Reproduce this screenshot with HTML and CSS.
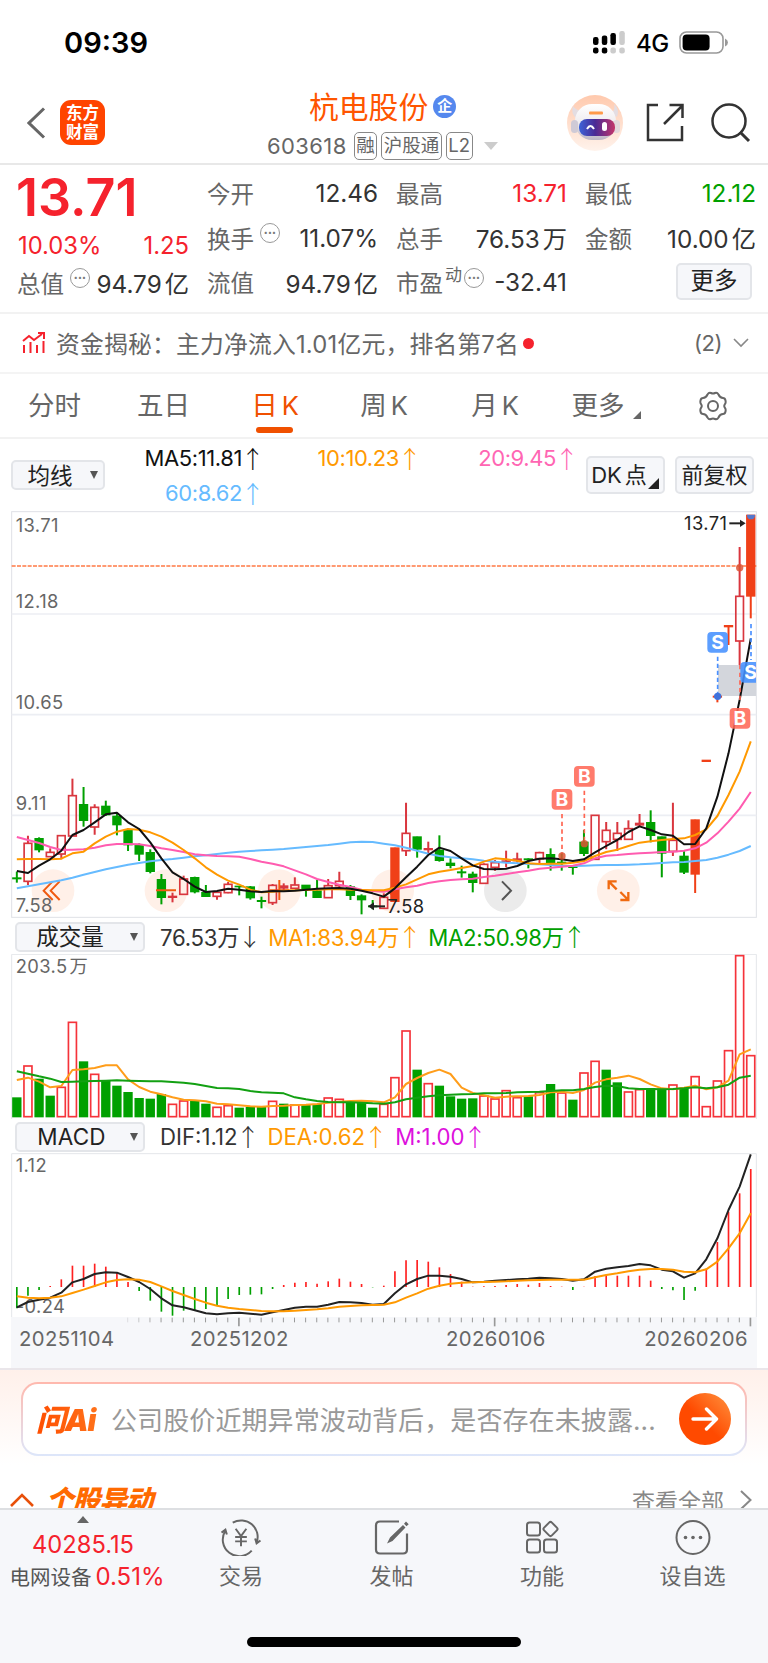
FILE: index.html
```html
<!DOCTYPE html>
<html lang="zh-CN">
<head>
  <meta charset="UTF-8">
  <meta name="viewport" content="width=device-width, initial-scale=1.0">
  <title>杭电股份 603618</title>
  <link rel="stylesheet" href="styles.css">
</head>
<body>
  <div class="phone">
    <div class="status">
      <span class="time">09:39</span>
      <div class="status-right">
        <svg class="signal" width="32" height="23" viewBox="0 0 32 23">
          <g fill="#000">
            <rect x="0" y="6" width="5.5" height="8" rx="2.2"/><rect x="8.8" y="4.5" width="5.5" height="9.5" rx="2.2"/><rect x="17.4" y="2" width="5.5" height="12" rx="2.2"/>
            <rect x="0" y="16.5" width="5.5" height="6" rx="2.2"/><rect x="8.8" y="16.5" width="5.5" height="6" rx="2.2"/>
          </g>
          <g fill="#ccc">
            <rect x="26.3" y="0" width="5.5" height="14" rx="2.2"/><rect x="17.4" y="16.5" width="5.5" height="6" rx="2.2"/><rect x="26.3" y="16.5" width="5.5" height="6" rx="2.2"/>
          </g>
        </svg>
        <span class="net">4G</span>
        <svg width="49" height="23" viewBox="0 0 49 23">
          <rect x="1" y="1" width="43" height="21" rx="6.5" fill="none" stroke="#999" stroke-width="1.6"/>
          <rect x="3.6" y="3.5" width="27" height="16" rx="4" fill="#000"/>
          <path d="M46 7.5q3 1.5 3 4t-3 4z" fill="#999"/>
        </svg>
      </div>
    </div>

    <header class="nav">
      <div class="nav-left">
        <svg width="19" height="32" viewBox="0 0 19 32"><path d="M17 1.5L2 16l15 14.5" fill="none" stroke="#666" stroke-width="3"/></svg>
        <div class="logo"><span>东方</span><span>财富</span></div>
      </div>
      <div class="nav-title">
        <h1>杭电股份<i class="verified">企</i></h1>
        <div class="code">603618<em class="first">融</em><em>沪股通</em><em>L2</em><i class="caret"></i></div>
      </div>
      <div class="nav-right">
        <svg width="56" height="56" viewBox="0 0 56 56">
          <defs>
            <linearGradient id="halo" x1="0" y1="0" x2="0" y2="1"><stop offset="0" stop-color="#ffc9ad"/><stop offset="1" stop-color="#fff3ec"/></linearGradient>
            <linearGradient id="visor" x1="0" y1="0" x2="1" y2="0"><stop offset="0" stop-color="#3d63d8"/><stop offset=".45" stop-color="#4a2a94"/><stop offset="1" stop-color="#c4356a"/></linearGradient>
            <linearGradient id="shell" x1="0" y1="0" x2="0" y2="1"><stop offset="0" stop-color="#fff"/><stop offset=".5" stop-color="#f0edf0"/><stop offset="1" stop-color="#bdb6c4"/></linearGradient>
          </defs>
          <circle cx="28" cy="28" r="28" fill="url(#halo)"/>
          <path d="M10 24Q3 18 6 11q3 5 11 5zM43 18q6-2 4-9 6 5 3 13z" fill="#e4dde2"/>
          <rect x="8" y="9" width="41" height="36" rx="17" fill="url(#shell)"/>
          <rect x="4" y="25" width="7" height="13" rx="3.5" fill="#cfcad6"/><rect x="46" y="25" width="7" height="13" rx="3.5" fill="#e3d8dc"/>
          <rect x="12" y="24" width="36" height="17" rx="8" fill="url(#visor)"/>
          <rect x="22" y="16.5" width="14" height="3" rx="1" fill="#ff9a4a"/>
          <path d="M20 34q3.500-6 7 0" fill="none" stroke="#fff" stroke-width="2"/><rect x="35" y="27" width="5" height="9" rx="2.500" fill="#fff"/>
        </svg>
        <svg class="share" width="39" height="39" viewBox="0 0 39 39"><path d="M12 2H2v35h34V23M18 21L36 3M23.500 2H36.500V15" fill="none" stroke="#333" stroke-width="2.500"/></svg>
        <svg width="40" height="40" viewBox="0 0 40 40"><circle cx="18" cy="18" r="16.5" fill="none" stroke="#333" stroke-width="2.5"/><path d="M29 29l9 9" stroke="#333" stroke-width="3"/></svg>
      </div>
    </header>

    <section class="quote">
      <div class="quote-main">
        <div class="price">13.71</div>
        <div class="change"><span>10.03%</span><span>1.25</span></div>
        <div class="cap"><label>总值</label><i class="tip">•••</i><b>94.79<u>亿</u></b></div>
      </div>
      <div class="quote-grid">
        <div><label>今开</label><b>12.46</b></div>
        <div><label>最高</label><b class="red">13.71</b></div>
        <div><label>最低</label><b class="green">12.12</b></div>
        <div><label>换手</label><i class="tip">•••</i><b>11.07%</b></div>
        <div><label>总手</label><b>76.53<u>万</u></b></div>
        <div><label>金额</label><b>10.00<u>亿</u></b></div>
        <div><label>流值</label><b>94.79<u>亿</u></b></div>
        <div><label>市盈</label><sup>动</sup><i class="tip tip-pe">•••</i><b>-32.41</b></div>
        <div><button class="more">更多</button></div>
      </div>
    </section>

    <section class="news">
      <svg width="24" height="22" viewBox="0 0 24 22"><g fill="none" stroke="#f5222d" stroke-width="2"><path d="M1 9l6-5 5 4 8-6M16 1h6v6M2 13v8M8.500 10v11M15 13v8M21.500 9v12"/></g></svg>
      <span class="news-text">资金揭秘：主力净流入1.01亿元，排名第7名</span>
      <i class="dot"></i>
      <span class="news-count">(2)</span>
      <svg width="16" height="10" viewBox="0 0 16 10"><path d="M1 1l7 7 7-7" fill="none" stroke="#888" stroke-width="1.6"/></svg>
    </section>

    <nav class="periods">
      <span>分时</span>
      <span>五日</span>
      <span class="active">日<u>K</u></span>
      <span>周<u>K</u></span>
      <span>月<u>K</u></span>
      <span class="drop">更多</span>
      <svg width="30" height="30" viewBox="0 0 30 30"><g fill="none" stroke="#666" stroke-width="2"><path d="M9.500 3.500Q11 1 13 2q2 1 4 0 2-1 3.500 1.500Q22 7 25 7q2 0 2.500 2.500Q28 12 27 13q-1.500 2 0 4 1 1 .5 3.500Q27 23 25 23q-3 0-4.500 3.500Q19 29 17 28q-2-1-4 0-2 1-3.500-1.500Q8 23 5 23q-2 0-2.500-2.500Q2 18 3 17q1.500-2 0-4-1-1-.5-3.500Q3 7 5 7q3 0 4.500-3.500z"/><circle cx="15" cy="15" r="5"/></g></svg>
    </nav>

    <section class="averages">
      <button class="pick pick-ma">均线</button>
      <div class="ma-grid">
        <span class="ma5">MA5:11.81<s>↑</s></span>
        <span class="ma10">10:10.23<s>↑</s></span>
        <span class="ma20">20:9.45<s>↑</s></span>
        <span class="ma60">60:8.62<s>↑</s></span>
      </div>
      <button class="tool tool-dk">DK<u>点</u></button>
      <button class="tool">前复权</button>
    </section>

    <svg id="kline" class="chart" width="768" height="407" viewBox="0 33 2304 1221"></svg>

    <div class="legend">
      <button class="pick">成交量</button>
      <span>76.53万<s>↓</s></span>
      <span class="ma10">MA1:83.94万<s>↑</s></span>
      <span class="green">MA2:50.98万<s>↑</s></span>
    </div>
    <svg id="volume" class="chart" width="768" height="165" viewBox="0 132 2304 495"></svg>

    <div class="legend legend-macd">
      <button class="pick">MACD</button>
      <span>DIF:1.12<s>↑</s></span>
      <span class="ma10">DEA:0.62<s>↑</s></span>
      <span class="purple">M:1.00<s>↑</s></span>
    </div>
    <svg id="macd" class="chart" width="768" height="164" viewBox="0 99 2304 492"></svg>
    <div class="dates">
      <svg id="ticks" width="745" height="10" viewBox="34 0 2235 30"></svg>
      <div class="date-row"><span>20251104</span><span>20251202</span><span>20260106</span><span>20260206</span></div>
    </div>

    <section class="ask">
      <div class="ask-card">
        <span class="ask-logo">问Ai</span>
        <span class="ask-text">公司股价近期异常波动背后，是否存在未披露...</span>
        <div class="ask-go"><svg width="28" height="24" viewBox="0 0 28 24"><path d="M2 12h23M15.500 2l10 10-10 10" fill="none" stroke="#fff" stroke-width="3.400" stroke-linecap="round" stroke-linejoin="round"/></svg></div>
      </div>
      <div class="moves">
        <svg width="24" height="14" viewBox="0 0 24 14"><path d="M1 13L12 2l11 11" fill="none" stroke="#e8500a" stroke-width="2.6"/></svg>
        <h2>个股异动</h2>
        <span>查看全部</span>
        <svg width="12" height="20" viewBox="0 0 12 20"><path d="M1 1l9.500 9L1 19" fill="none" stroke="#888" stroke-width="2"/></svg>
      </div>
    </section>

    <footer class="tabbar">
      <div class="tab-index">
        <i class="up"></i>
        <span class="index">40285.15</span>
        <span class="sector">电网设备<b>0.51%</b></span>
      </div>
      <div class="tab">
        <svg width="42" height="38" viewBox="0 0 42 38"><g fill="none" stroke="#666" stroke-width="2"><path d="M12.500 3.800A17 17 0 0 1 37 24.500M41 22l-4 3-1.500-5M32 32.500A17 17 0 0 1 5 12M1 14l4-3 1.500 5"/><path d="M15.500 10l5.500 7.500 5.500-7.500M21 17.500V28M15 18.500h12M15 23h12"/></g></svg>
        <span>交易</span>
      </div>
      <div class="tab">
        <svg width="36" height="36" viewBox="0 0 36 36"><path d="M25 2H6Q2 2 2 6v24q0 4 4 4h23q4 0 4-4V14" fill="none" stroke="#666" stroke-width="2.2"/><path d="M13 24l3-6L29 5.500l2.500 2.500L18.500 21.500zM30 4.300l2-2.300 2.700 2.700-2.200 2z" fill="#666"/></svg>
        <span>发帖</span>
      </div>
      <div class="tab">
        <svg width="36" height="36" viewBox="0 0 36 36"><g fill="none" stroke="#666" stroke-width="2"><rect x="3" y="3" width="13" height="13" rx="2.5"/><rect x="3" y="20" width="13" height="13" rx="2.5"/><rect x="20" y="20" width="13" height="13" rx="2.5"/><rect x="21" y="4" width="11" height="11" rx="2" transform="rotate(45 26.5 9.5)"/></g></svg>
        <span>功能</span>
      </div>
      <div class="tab">
        <svg width="36" height="36" viewBox="0 0 36 36"><circle cx="18" cy="18" r="16.5" fill="none" stroke="#666" stroke-width="2"/><g fill="#666"><circle cx="10.5" cy="18" r="1.8"/><circle cx="18" cy="18" r="1.8"/><circle cx="25.5" cy="18" r="1.8"/></g></svg>
        <span>设自选</span>
      </div>
      <div class="home"></div>
    </footer>
  </div>
  <script src="chart.js"></script>
</body>
</html>
```

FILE: styles.css
```css
:root {
  --red: #f5222d;
  --green: #00a000;
  --orange: #ff9900;
  --brand: #f05000;
  --text: #333333;
  --muted: #666666;
  --panel: #f6f7fa;
}

* {
  margin: 0;
  padding: 0;
  box-sizing: border-box;
}

body {
  font-family: Inter, "Noto Sans CJK SC", sans-serif;
  background: #fff;
  color: var(--text);
}

i, em { font-style: normal; }
b { font-weight: 400; }
s, u { text-decoration: none; }
svg { display: block; flex: none; }
button { font-family: inherit; color: #222; background: var(--panel); border: 2px solid #e3e5e9; border-radius: 5px; }

.phone {
  width: 768px;
  height: 1663px;
  overflow: hidden;
  display: flex;
  flex-direction: column;
}
.phone > * { flex: none; }

.red { color: var(--red) !important; }
.green { color: var(--green) !important; }
.purple { color: #dd11dd; }

/* status bar */
.status {
  height: 84px;
  padding: 0 40px 0 64px;
  display: flex;
  justify-content: space-between;
  align-items: center;
  color: #000;
}
.time { font-size: 29px; font-weight: 600; }
.status-right { display: flex; align-items: center; }
.net { font-size: 24px; font-weight: 500; margin: 2px 10px 0 11px; letter-spacing: -0.3px; }

/* header */
.nav {
  height: 81px;
  display: grid;
  grid-template-columns: 230px 1fr 230px;
  border-bottom: 2px solid #e8e8e8;
}
.nav-left { display: flex; align-items: center; gap: 14px; padding: 0 0 2px 27px; }
.logo {
  width: 45px;
  height: 45px;
  border-radius: 11px;
  background: #ff4400;
  color: #fff;
  font-size: 16.5px;
  font-weight: 700;
  line-height: 18.5px;
  display: flex;
  flex-direction: column;
  justify-content: center;
  align-items: center;
}
.nav-title h1 {
  height: 42px;
  margin-bottom: 4px;
  padding-left: 79px;
  display: flex;
  align-items: center;
  font-size: 29.8px;
  font-weight: 400;
  color: #ff5500;
}
.verified {
  width: 23px;
  height: 23px;
  margin: 2px 0 0 5px;
  border-radius: 50%;
  background: #5588ee;
  color: #fff;
  font-size: 15px;
  font-weight: 700;
  line-height: 22px;
  text-align: center;
}
.code { display: flex; align-items: center; padding-left: 37px; height: 32px; font-size: 22px; letter-spacing: 0.4px; color: var(--muted); }
.code em { height: 28px; line-height: 24px; padding: 0 1.5px; border: 1.5px solid #888; border-radius: 5px; font-size: 18.5px; letter-spacing: 0; margin-right: 4px; }
.code .first { margin-left: 7px; }
.caret { border: 7px solid transparent; border-top: 8px solid #ccc; border-bottom: 0; margin-left: 7px; }
.nav-right { display: flex; align-items: center; padding: 0 0 2px 29px; gap: 23px; }
.nav-right svg + svg + svg { margin-left: 3px; }

/* quote */
.quote {
  height: 149px;
  display: flex;
  gap: 18px;
  padding: 6px 12px 0 18px;
  border-bottom: 2px solid #f2f2f2;
  font-size: 24px;
}
.quote label { font-size: 23.5px; color: var(--muted); }
.quote-main { width: 171px; color: var(--red); }
.price { height: 53px; line-height: 54px; font-size: 52px; font-weight: 600; margin-left: -2px; }
.change { height: 43px; display: flex; justify-content: space-between; align-items: center; font-size: 23.8px; }
.cap { height: 31px; display: flex; align-items: center; color: var(--text); }
.cap label { margin-left: -1px; }
.quote b { margin-left: auto; color: #333; font-size: 24.3px; white-space: nowrap; }
.quote u { margin-left: 3px; }
.quote-grid {
  flex: 1;
  display: grid;
  grid-template-columns: repeat(3, 171px);
  grid-auto-rows: 44.5px;
  gap: 0 18px;
}
.quote-grid div { display: flex; align-items: center; }
.tip {
  width: 20px;
  height: 20px;
  margin: -9px 0 0 6px;
  border: 1.5px solid #999;
  border-radius: 50%;
  font-size: 7px;
  line-height: 17px;
  letter-spacing: 0.3px;
  text-align: center;
  color: #777;
}
.tip-pe { margin-left: 2px; }
.quote sup { font-size: 17px; line-height: 20px; color: var(--muted); margin: -14px 0 0 2px; }
.more { width: 76px; height: 37px; margin: -2px 4px 0 auto; font-size: 23.5px; line-height: 30px; }

/* news */
.news { height: 60px; display: flex; align-items: center; padding: 0 19px 0 22px; border-bottom: 2px solid #f4f4f4; font-size: 23.8px; color: var(--muted); }
.news-text { margin: -1px 0 0 10px; letter-spacing: 0.2px; }
.dot { width: 11px; height: 11px; margin-left: 4px; border-radius: 50%; background: var(--red); }
.news-count { margin: 0 11px 0 auto; font-size: 22px; letter-spacing: -0.5px; }

/* periods */
.periods {
  height: 65px;
  display: grid;
  grid-template-columns: 109px 109px 109px 109px 109px 135px 1fr;
  align-items: center;
  border-bottom: 2px solid #f2f2f2;
  font-size: 26.5px;
  color: var(--muted);
  text-align: center;
}
.periods span { height: 63px; line-height: 63px; position: relative; }
.periods u { margin-left: 4px; font-size: 25.5px; }
.periods span:nth-child(4) { padding-left: 5px; }
.periods span:nth-child(5) { padding-left: 9px; }
.periods .active { color: var(--brand); padding-left: 5px; }
.active::after {
  content: "";
  position: absolute;
  left: 38px;
  bottom: 4px;
  width: 37px;
  height: 6px;
  border-radius: 3px;
  background: var(--brand);
}
.drop { padding-right: 29px; }
.drop::after {
  content: "";
  position: absolute;
  right: 39px;
  bottom: 18px;
  border-left: 8px solid transparent;
  border-bottom: 8px solid #666;
}
.periods svg { margin-left: 18px; }

/* averages */
.averages { height: 72px; display: flex; padding-left: 11px; }
.pick {
  position: relative;
  width: 130px;
  height: 30px;
  padding-right: 20px;
  font-size: 22.5px;
  line-height: 25px;
}
.pick::after {
  content: "";
  position: absolute;
  right: 5px;
  top: 9px;
  border: 4px solid transparent;
  border-top: 8px solid #555;
  border-bottom: 0;
}
.pick-ma { width: 94px; margin-top: 21px; padding-right: 16px; }
.ma-grid {
  width: 470px;
  display: grid;
  grid-template-columns: 154px 157px 157px;
  grid-auto-rows: 34.5px;
  font-size: 22px;
  text-align: right;
  letter-spacing: -0.4px;
  margin-top: 2px;
}
.ma-grid span, .legend span { display: flex; align-items: center; justify-content: flex-end; }
s { font-family: "Noto Sans CJK SC"; font-weight: 300; width: 13px; margin-left: 4px; font-size: 24px; line-height: 30px; display: flex; justify-content: center; }
.ma5 { color: #111; }
.ma10 { color: var(--orange); }
.ma20 { color: #ff66b3; }
.ma60 { color: #66bbff; }
.tool { width: 79px; height: 38px; margin: 17px 0 0 10px; font-size: 22px; line-height: 33px; white-space: nowrap; }
.tool-dk { position: relative; margin-left: 11px; padding-right: 13px; }
.tool-dk u { margin-left: 3px; }
.tool-dk::after { content: ""; position: absolute; right: 4px; bottom: 3px; border-left: 11px solid transparent; border-bottom: 11px solid #222; }

/* charts */
.chart text { font-size: 55px; letter-spacing: 1.2px; fill: #666; }
.chart .mark { font-size: 58px; font-weight: 700; letter-spacing: 0; fill: #fff; text-anchor: middle; }
.chart .peak { fill: #222; }
.chart .peak-end { fill: #222; text-anchor: end; }
.legend { height: 36px; display: flex; align-items: center; padding: 0 0 0 15px; font-size: 22.2px; letter-spacing: -0.25px; }
.legend .pick { letter-spacing: 0; margin-top: 1px; }
.legend span { margin-left: 12px; }
.legend span:nth-child(2) { margin-left: 15px; }
.legend-macd { height: 34px; letter-spacing: 0; }
.legend-macd span { margin-left: 13px; }
.legend-macd .pick { letter-spacing: 0.2px; padding-right: 17px; }

.dates { height: 51px; margin: 0 11px; background: var(--panel); color: #666; font-size: 20.3px; }
.date-row { display: grid; grid-template-columns: 100px 257px 257px 1fr; line-height: 24px; padding: 0 9px 0 8px; letter-spacing: 0.4px; }
.date-row span:nth-child(2) { padding-left: 71px; }
.date-row span:nth-child(3) { padding-left: 70px; }
.date-row span:nth-child(4) { text-align: right; margin-left: -20px; }

/* ask */
.ask { height: 140px; padding: 12px 21px 0; border-top: 2px solid #eae6ea; background: linear-gradient(#fff0ea, #fff 95px); }
.ask-card {
  height: 74px;
  display: flex;
  align-items: center;
  padding: 0 14px 0 12px;
  border: 2px solid transparent;
  border-radius: 17px;
  background: linear-gradient(#fff, #fff) padding-box, linear-gradient(#ffb8ad, #dde6fa) border-box;
}
.ask-logo { width: 76px; margin-top: -3px; padding-left: 1px; font-size: 30px; font-weight: 900; font-style: italic; letter-spacing: -1.2px; background: linear-gradient(90deg, #ff4d00, #ff7a20); -webkit-background-clip: text; background-clip: text; color: transparent; }
.ask-text { margin-top: -2px; font-size: 26px; letter-spacing: 0.1px; color: #999; white-space: nowrap; }
.ask-go { width: 52px; height: 52px; margin: -1px 0 0 auto; border-radius: 50%; background: linear-gradient(45deg, #ff4a00 45%, #ff9440); display: flex; align-items: center; justify-content: center; }
.moves { display: flex; align-items: center; height: 40px; margin: 24px -5px 0 -11px; color: #888; font-size: 23px; }
.moves h2 { margin: -4px auto 0 12px; font-size: 27.5px; font-weight: 900; font-style: italic; letter-spacing: -0.8px; color: #ff6a00; }
.moves span { margin-right: 16px; }

/* bottom bar */
.tabbar {
  height: 155px;
  border-top: 2px solid #dddfe2;
  background: var(--panel);
  display: grid;
  grid-template-columns: 166px 150px 151px 150px 151px;
  grid-template-rows: 127px 28px;
  position: relative;
  z-index: 1;
}
.tab { display: flex; flex-direction: column; align-items: center; padding-top: 9px; color: #666; font-size: 22px; }
.tab svg { height: 37px; }
.tab span { line-height: 28px; margin-top: 6px; }
.tab-index { display: flex; flex-direction: column; align-items: center; color: var(--red); }
.up { border: 6.5px solid transparent; border-bottom: 7px solid #666; border-top: 0; margin-top: 6px; }
.index { font-size: 23.7px; line-height: 28px; margin-top: 8px; }
.sector { font-size: 20.5px; line-height: 28px; margin: 4px 0 0 8px; color: #555; white-space: nowrap; }
.sector b { color: var(--red); font-size: 24px; margin-left: 4px; }
.home { grid-column: 1 / -1; width: 274px; height: 10px; margin: 0 auto; border-radius: 5px; background: #000; }
```

FILE: chart.js
```js
// All charts share one column step; coordinates are on a @3x canvas.
const X0 = 50.5, STEP = 33.36;
const RED = '#d9363e', GREEN = '#00a000', HOT = '#f04018';
const x = i => X0 + i * STEP;

// [kind, body top, body bottom, high, low]
const candles = [
  ['g',1133,1137,1115,1148],['r',1030,1144,1007,1155],['g',1015,1050,1012,1057],['r',1057,1070,1045,1070],
  ['r',1007,1062,1005,1078],['r',887,1008,836,1008],['g',913,962,861,980],['r',922,981,913,1004],
  ['g',918,945,902,948],['g',948,975,942,1006],['g',990,1035,985,1053],['g',1035,1063,1030,1083],
  ['g',1057,1115,1048,1120],['g',1138,1193,1122,1213],['r',1188,1193,1178,1207],['r',1137,1183,1127,1183],
  ['g',1132,1176,1130,1180],['g',1177,1190,1155,1190],['r',1177,1189,1175,1199],['r',1153,1178,1146,1180],
  ['g',1158,1161,1158,1186],['g',1160,1194,1158,1199],['g',1201,1205,1190,1225],['r',1156,1208,1152,1215],
  ['r',1157,1165,1150,1170],['r',1155,1165,1132,1165],['g',1155,1166,1155,1190],['g',1172,1193,1140,1193],
  ['r',1157,1193,1137,1193],['r',1144,1157,1115,1165],['g',1160,1187,1155,1200],['g',1187,1200,1183,1243],
  ['g',1217,1221,1200,1228],['r',1192,1225,1180,1225],['o',1043,1205,1043,1205],['r',1000,1052,908,1068],
  ['g',1010,1048,1010,1073],['r',1045,1050,1025,1060],['g',1050,1082,1006,1085],['g',1089,1097,1075,1105],
  ['g',1115,1119,1097,1133],['g',1122,1148,1115,1177],['r',1093,1150,1090,1150],['r',1088,1102,1080,1112],
  ['r',1082,1087,1052,1102],['r',1076,1083,1058,1088],['g',1076,1080,1075,1105],['r',1058,1076,1055,1090],
  ['g',1063,1088,1045,1112],['g',1086,1090,1060,1112],['g',1099,1103,1095,1124],['g',1026,1061,990,1068],
  ['r',946,1078,946,1078],['r',991,1025,966,1048],['r',1000,1018,966,1053],['r',986,1018,961,1018],
  ['r',969,976,942,980],['g',967,1007,931,1027],['g',1010,1060,1010,1132],['r',1021,1054,908,1068],
  ['g',1068,1117,1053,1122],['o',959,1123,959,1179],['o',780,785,780,785],['o',588,592,588,607],
  ['o',376,381,376,435],['r',289,423,141,495],['o',45,289,45,355]
];

const ma5 = [1113,1119,1097,1078,1052,1005,990,967,943,938,967,987,1027,1075,1117,1137,1160,1176,1173,1166,1169,1174,1176,1173,1174,1172,1169,1166,1165,1164,1166,1172,1180,1190,1165,1132,1100,1065,1043,1053,1075,1096,1107,1108,1106,1098,1083,1076,1075,1078,1083,1078,1057,1038,1020,996,979,990,1003,1007,1033,1032,985,890,760,600,415];
const ma10 = [1078,1077,1077,1078,1076,1060,1055,1030,1010,995,987,989,997,1010,1028,1050,1075,1102,1124,1142,1154,1169,1177,1175,1172,1171,1170,1169,1168,1168,1169,1170,1171,1171,1163,1153,1138,1123,1115,1110,1104,1098,1085,1075,1078,1082,1090,1092,1091,1091,1088,1083,1068,1056,1049,1038,1028,1024,1020,1017,1015,1005,988,948,885,815,724];
const ma20 = [1011,1020,1029,1041,1050,1049,1048,1043,1036,1032,1032,1033,1038,1045,1050,1056,1063,1066,1068,1069,1070,1077,1085,1091,1099,1111,1123,1137,1146,1154,1161,1169,1173,1175,1168,1162,1157,1149,1144,1140,1138,1136,1131,1127,1122,1117,1112,1106,1103,1100,1097,1090,1075,1067,1065,1062,1060,1058,1056,1055,1052,1045,1028,1000,965,926,876];
const ma60 = [1165,1159,1153,1147,1141,1133,1124,1116,1108,1101,1094,1089,1084,1080,1077,1073,1069,1066,1062,1058,1055,1053,1051,1049,1047,1044,1041,1038,1035,1031,1027,1025,1026,1031,1036,1043,1052,1061,1068,1072,1075,1078,1082,1085,1088,1090,1092,1093,1095,1097,1098,1097,1096,1095,1095,1094,1093,1091,1089,1087,1086,1083,1080,1073,1064,1053,1038];

const volumes = 'g563 r468 g507 g558 r532 r337 g455 r493 g514 g528 g547 g565 g567 g553 r583 r573 g574 g582 r592 r587 g594 g592 g592 r574 g582 r585 g585 g583 r564 r568 g576 g573 g594 r583 r503 r363 g480 r521 g528 g560 g567 g566 r558 r567 r542 r563 g560 r548 g523 r549 g570 r489 r454 g480 g518 r546 r539 g535 g537 r525 g534 r500 r590 r513 r422 r137 r437'.split(' ');
const vol1 = [510,503,515,532,528,480,478,474,466,466,508,531,545,553,562,569,571,574,581,583,586,589,590,588,587,585,584,582,578,575,573,572,574,577,562,522,504,489,479,492,533,549,556,563,560,559,558,555,547,545,549,540,518,508,503,497,507,523,535,538,533,527,538,532,512,433,418];
const vol2 = [484,491,499,506,516,515,514,513,512,511,512,513,514,514,516,518,522,528,534,535,537,543,547,548,550,562,568,573,576,577,577,578,580,581,577,568,563,559,556,554,553,552,550,550,549,547,546,545,543,541,541,537,531,527,528,535,537,537,538,537,535,532,535,532,524,503,497];

const ZERO = 501;
const macd = [565,527,510,498,478,437,437,431,440,458,486,513,542,575,587,572,570,567,555,537,525,524,523,507,495,488,486,491,484,476,485,492,502,497,454,421,420,425,442,462,485,500,499,498,495,492,494,489,498,500,510,500,468,467,467,467,467,482,507,511,540,512,446,366,275,220,147];
const dif = [562,546,539,533,518,487,477,462,457,458,471,486,507,535,556,562,571,580,583,580,578,581,584,577,570,563,560,560,554,546,547,549,554,552,520,493,477,467,467,470,477,487,485,482,480,478,476,473,475,477,482,478,455,446,442,438,432,436,449,454,473,460,418,355,270,200,103];
const dea = [529,533,535,533,529,519,509,498,487,480,478,479,486,499,513,525,537,548,557,563,567,570,573,574,574,572,570,568,565,560,558,556,555,554,547,533,520,506,497,491,488,487,486,485,484,482,481,480,479,479,479,479,472,465,460,454,449,447,447,449,455,457,448,425,385,340,280];

const rect = (l, t, w, h, attr) => `<rect x="${l}" y="${t}" width="${w}" height="${h}" ${attr}/>`;
const path = (d, color, w, attr = '') => `<path d="${d}" fill="none" stroke="${color}" stroke-width="${w}" ${attr}/>`;
const curve = (pts, color) => path('M' + pts.map((y, i) => `${x(i).toFixed(1)} ${y}`).join('L'), color, 6, 'stroke-linejoin="round"');
const label = (l, y, s, cls = '') => `<text x="${l}" y="${y}" class="${cls}">${s}</text>`;

function candle([kind, top, bottom, high, low], i) {
  const cx = x(i), h = bottom - top;
  const color = kind === 'g' ? GREEN : kind === 'r' ? RED : HOT;
  if (kind === 'r' && h > 8) {
    return path(`M${cx} ${high}V${top}M${cx} ${bottom}V${low}`, color, 6) +
      rect(cx - 11.5, top, 23, h, `fill="none" stroke="${color}" stroke-width="5"`);
  }
  return path(`M${cx} ${high}V${low}`, color, 6) + rect(cx - 14, top - 1, 28, h + 2, `fill="${color}"`);
}

// floating control buttons under the candles
function controls() {
  const spots = [[159, '#fff0e8'], [498, '#fff0e8'], [838, '#fff0e8'], [1178, '#fff0e8'], [1516, '#ebebeb'], [1855, '#fff0e8']];
  return spots.map(([cx, fill]) => `<circle cx="${cx}" cy="1172" r="64" fill="${fill}"/>`).join('') +
    path('M158 1144L131 1172l27 28M179 1144L152 1172l27 28', '#f05a10', 6) +
    path('M808 1171h60M1192 1144L1164 1172l28 28', '#f05a10', 6) +
    path('M1506 1144L1533 1172l-27 28', '#555', 6) +
    path('M1826 1168V1144h24M1826 1144L1850 1168M1885 1176V1200H1861M1885 1200L1861 1176', '#f06a10', 7);
}

function badge(cx, cy, s, color) {
  return rect(cx - 31, cy - 31, 62, 62, `rx="12" fill="${color}"`) + label(cx, cy + 21, s, 'mark');
}

function kline() {
  const B = 'rgba(255,105,88,.88)', S = 'rgba(70,145,255,.88)';
  let out = rect(35, 35, 2234, 1217, 'fill="none" stroke="#dfe1e6" stroke-width="3"');
  out += [342, 644, 946].map(y => path(`M35 ${y}H2269`, '#eceef3', 5)).join('');
  out += controls();
  out += path('M35 198H2269', '#ff7a45', 5, 'stroke-dasharray="12 4"');
  out += rect(2154, 495, 114, 93, 'fill="#d3d6dc"');
  out += candles.map(candle).join('');
  out += path('M468 1171h60M838 1140v60', '#f05a10', 6);
  out += curve(ma60, '#66bbff') + curve(ma20, '#ff5cb0') + curve(ma10, '#ff9900') + curve(ma5, '#111');
  out += path('M1686 942V1062M1753 872V1028M2220 495V610', '#ff6450', 5, 'stroke-dasharray="13 10"');
  out += path('M2153 470V586M2253 372V480', '#4a90ff', 5, 'stroke-dasharray="13 8"');
  out += [[1686, 1068], [1753, 1031], [2219, 203]].map(([cx, cy]) => `<circle cx="${cx}" cy="${cy}" r="11" fill="#dd5535" fill-opacity=".85"/>`).join('');
  out += '<circle cx="2153" cy="589" r="11" fill="#3f72dc"/><path d="M2241 44h24q0 14-12 14t-12-14z" fill="#5577cc"/>';
  out += badge(1686, 898, 'B', B) + badge(1753, 829, 'B', B) + badge(2220, 655, 'B', B) + badge(2153, 427, 'S', S);
  out += `<g clip-path="url(#edge)">${badge(2252, 517, 'S', S)}</g><clipPath id="edge"><rect x="0" y="0" width="2268" height="1254"/></clipPath>`;
  out += [[97, '13.71'], [323, '12.18'], [627, '10.65'], [930, '9.11'], [1235, '7.58']].map(([y, s]) => label(47, y, s)).join('');
  out += label(2182, 90, '13.71', 'peak-end') + path('M2188 70h40', '#222', 6) + '<path d="M2220 59l17 11-17 11z" fill="#222"/>';
  out += label(1162, 1240, '7.58', 'peak') + path('M1115 1219h40', '#222', 6) + '<path d="M1122 1207l-18 12 18 12z" fill="#222"/>';
  return out;
}

function volume() {
  let out = path('M35 627V133H2269V627', '#e4e6ea', 3);
  out += volumes.map((v, i) => {
    const up = v[0] === 'r', top = +v.slice(1), cx = x(i);
    return up ? rect(cx - 12, top, 24, 620 - top, 'fill="none" stroke="#f5333a" stroke-width="5"')
              : rect(cx - 14, top - 1, 28, 623 - top, `fill="${GREEN}"`);
  }).join('');
  return out + curve(vol1, '#ff9d1a') + curve(vol2, '#12a012') + label(47, 189, '203.5<tspan dx="6">万</tspan>');
}

function macdChart() {
  let out = path('M35 591V101H2269V591', '#e4e6ea', 3);
  out += macd.map((y, i) => path(`M${x(i)} ${ZERO}V${y}`, y > ZERO ? GREEN : '#ff2020', 5)).join('');
  return out + label(47, 157, '1.12') + label(47, 579, '-0.24') + curve(dif, '#222') + curve(dea, '#ff9900');
}

function ticks() {
  let out = '';
  for (let i = 10; i < 67; i++) {
    const major = i === 20 || i === 43 || i === 66;
    out += path(`M${x(i)} 2V${major ? 28 : 16}`, '#999', major ? 5 : 3, `opacity="${Math.min(1, (i - 9) / 4)}"`);
  }
  return out;
}

document.getElementById('kline').innerHTML = kline();
document.getElementById('volume').innerHTML = volume();
document.getElementById('macd').innerHTML = macdChart();
document.getElementById('ticks').innerHTML = ticks();
```
